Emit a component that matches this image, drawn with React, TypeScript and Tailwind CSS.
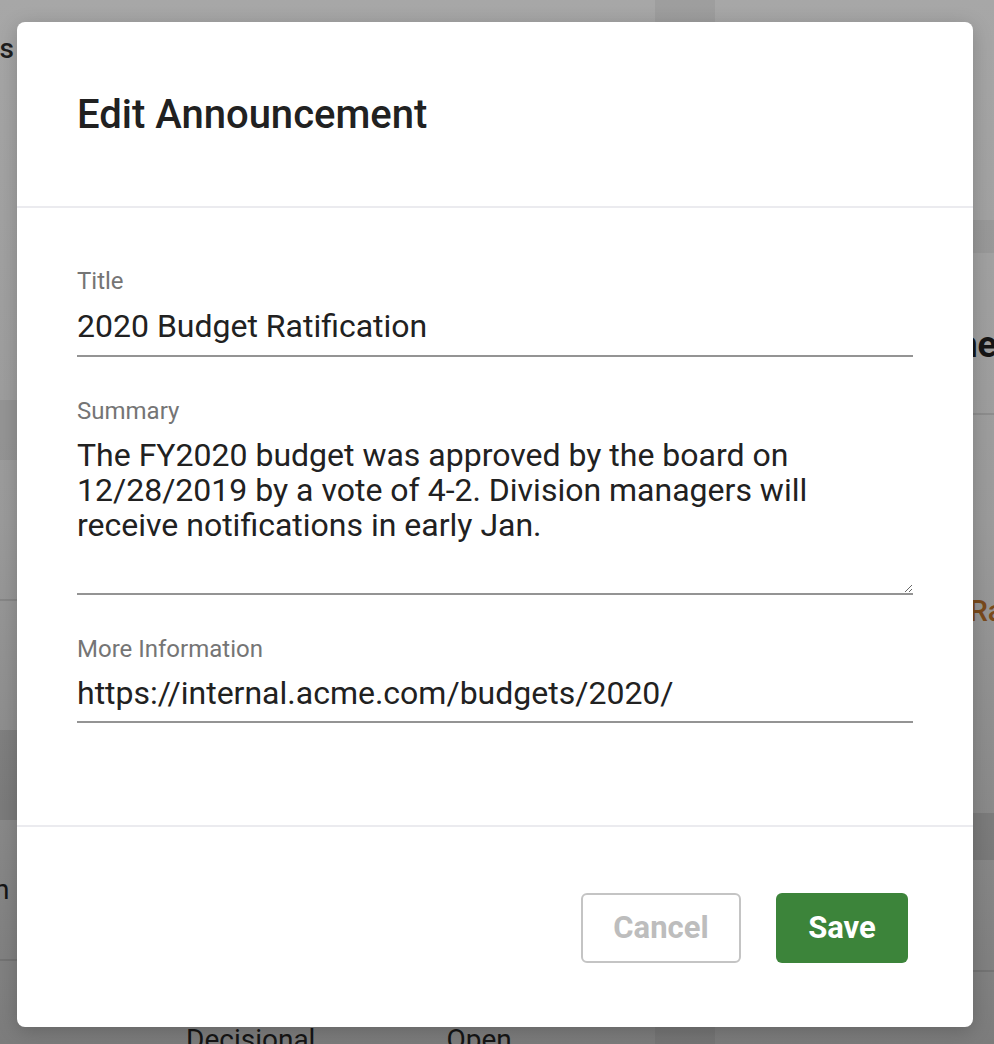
import React from "react";

function Background() {
  return (
    <div className="flex h-[1044px] w-[994px] bg-gradient-to-b from-[#a7a7a7] via-[#9b9b9b] to-[#7c7c7c] font-['Roboto',sans-serif]">
      <div className="flex w-[655px] flex-col">
        <div className="flex h-[400px] items-start">
          <div className="-ml-[16px] pt-[35px] text-[28px] font-medium leading-none text-[#1e1e1e]">us</div>
        </div>
        <div className="h-[60px] bg-black/5" />
        <div className="h-[139px]" />
        <div className="h-[2px] bg-black/10" />
        <div className="h-[129px]" />
        <div className="h-[90px] bg-black/10" />
        <div className="flex h-[139px] items-center">
          <div className="-ml-[6px] text-[28px] leading-none text-[#151515]">n</div>
        </div>
        <div className="h-[2px] bg-black/10" />
        <div className="flex flex-1 items-end">
          <div className="ml-[186px] -mb-[10px] text-[28px] leading-none text-[#151515]">Decisional</div>
          <div className="ml-[131px] -mb-[10px] text-[28px] leading-none text-[#151515]">Open</div>
        </div>
      </div>
      <div className="w-[60px] bg-black/5" />
      <div className="flex flex-1 flex-col">
        <div className="h-[220px]" />
        <div className="h-[33px] bg-black/5" />
        <div className="flex h-[160px] items-start justify-end">
          <div className="-mr-[3px] mt-[74px] text-[36px] font-bold leading-none text-[#151515]">ne</div>
        </div>
        <div className="h-[2px] bg-black/10" />
        <div className="flex h-[398px] items-start justify-end">
          <div className="-mr-[10px] mt-[181px] text-[30px] font-medium leading-none text-[#7a4a1c]">Ra</div>
        </div>
        <div className="h-[47px] bg-black/10" />
        <div className="h-[110px]" />
        <div className="h-[2px] bg-black/10" />
      </div>
    </div>
  );
}

function Field({ label, children }: { label: string; children: React.ReactNode }) {
  return (
    <div className="flex flex-col">
      <label className="text-[24px] leading-[24px] text-[#757575]">{label}</label>
      {children}
    </div>
  );
}

export default function App() {
  return (
    <div className="relative h-[1044px] w-[994px] overflow-hidden font-['Roboto',sans-serif]">
      <Background />
      <div className="absolute inset-0 pl-[17px] pt-[22px]">
        <div className="flex h-[1005px] w-[956px] flex-col rounded-[8px] bg-white shadow-[0_4px_20px_rgba(0,0,0,0.2)]">
          <div className="flex h-[184px] items-center px-[60px] pt-[2px]">
            <h1 className="text-[40px] font-medium leading-none text-[#212121]">Edit Announcement</h1>
          </div>
          <div className="h-[2px] bg-[#ebebef]" />
          <div className="flex flex-col gap-[42px] px-[60px] pt-[61px] pb-[102px]">
            <Field label="Title">
              <input
                defaultValue="2020 Budget Ratification"
                className="mt-[16px] h-[48px] w-full border-b-2 border-[#949494] pb-[12px] text-[32px] leading-[34px] text-[#212121] outline-none"
              />
            </Field>
            <Field label="Summary">
              <textarea
                defaultValue="The FY2020 budget was approved by the board on 12/28/2019 by a vote of 4-2. Division managers will receive notifications in early Jan."
                className="mt-[15px] h-[157px] w-full resize-y border-b-2 border-[#949494] pb-[15px] text-[32px] leading-[35px] text-[#212121] outline-none"
              />
            </Field>
            <Field label="More Information">
              <input
                defaultValue="https://internal.acme.com/budgets/2020/"
                className="mt-[15px] h-[47px] w-full border-b-2 border-[#949494] pb-[11px] text-[32px] leading-[34px] text-[#212121] outline-none"
              />
            </Field>
          </div>
          <div className="h-[2px] bg-[#ebebef]" />
          <div className="flex flex-1 items-center justify-end gap-[35px] pr-[65px] pt-[2px]">
            <button className="flex h-[70px] w-[160px] items-center justify-center rounded-[6px] border-2 border-[#c4c4c4] bg-white text-[31px] font-bold text-[#bdbdbd]">
              Cancel
            </button>
            <button className="flex h-[70px] w-[132px] items-center justify-center rounded-[6px] bg-[#3c843a] text-[31px] font-bold text-white">
              Save
            </button>
          </div>
        </div>
      </div>
    </div>
  );
}
